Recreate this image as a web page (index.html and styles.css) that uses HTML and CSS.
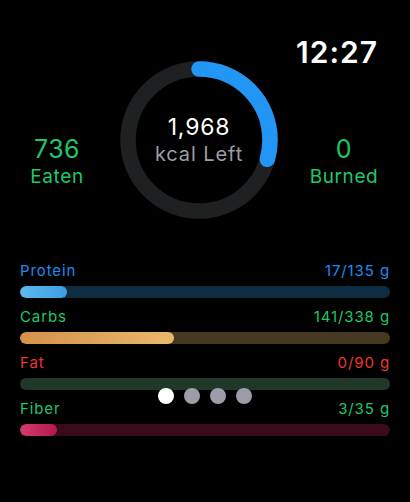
FILE: index.html
```html
<!DOCTYPE html>
<html>
<head>
<meta charset="utf-8">
<link rel="stylesheet" href="styles.css">
</head>
<body>
<div class="screen">
  <div class="time">12:27</div>
  <section class="summary">
    <div class="stat">
      <div class="stat-num">736</div>
      <div class="stat-label">Eaten</div>
    </div>
    <div class="ring">
      <svg class="ring-svg" width="158" height="158" viewBox="0 0 158 158">
        <circle cx="79" cy="79" r="71" fill="none" stroke="#1f2022" stroke-width="15.5"/>
        <circle cx="79" cy="79" r="71" fill="none" stroke="#2196f5" stroke-width="15.5" stroke-linecap="round"
          stroke-dasharray="131 1000" transform="rotate(-90 79 79)"/>
      </svg>
      <div class="ring-text">
        <div class="ring-num">1,968</div>
        <div class="ring-label">kcal Left</div>
      </div>
    </div>
    <div class="stat">
      <div class="stat-num">0</div>
      <div class="stat-label">Burned</div>
    </div>
  </section>
  <section class="macros">
    <div class="macro">
      <div class="macro-head protein-text"><span>Protein</span><span>17/135 g</span></div>
      <div class="track protein-track"><div class="fill protein-fill" style="width:12.7%"></div></div>
    </div>
    <div class="macro">
      <div class="macro-head green-text"><span>Carbs</span><span>141/338 g</span></div>
      <div class="track carbs-track"><div class="fill carbs-fill" style="width:41.7%"></div></div>
    </div>
    <div class="macro">
      <div class="macro-head red-text"><span>Fat</span><span>0/90 g</span></div>
      <div class="track fat-track"></div>
    </div>
    <div class="macro">
      <div class="macro-head green-text"><span>Fiber</span><span>3/35 g</span></div>
      <div class="track fiber-track"><div class="fill fiber-fill" style="width:9.9%"></div></div>
    </div>
  </section>
  <div class="dots">
    <span class="dot active"></span>
    <span class="dot"></span>
    <span class="dot"></span>
    <span class="dot"></span>
  </div>
</div>
</body>
</html>
```

FILE: styles.css
```css
html, body {
  margin: 0;
  padding: 0;
  background: #000;
}
body {
  font-family: Inter, "Noto Sans", sans-serif;
  color: #fff;
}
.screen {
  position: relative;
  width: 410px;
  height: 502px;
  overflow: hidden;
  background: #000;
}
.time {
  position: absolute;
  top: 35px;
  right: 32px;
  font-size: 30px;
  line-height: 35px;
  font-weight: 600;
  letter-spacing: 1px;
}
.summary {
  display: grid;
  grid-template-columns: 114px 158px 1fr;
  column-gap: 6px;
  padding: 61px 6px 0 0;
}
.stat {
  display: flex;
  flex-direction: column;
  align-items: center;
  padding-top: 73px;
  color: #1ec86a;
}
.stat-num {
  font-size: 25px;
  line-height: 30px;
  letter-spacing: 0.5px;
}
.stat-label {
  font-size: 19px;
  line-height: 24px;
  margin-top: 1px;
  letter-spacing: 0.6px;
}
.ring {
  display: grid;
  width: 158px;
  height: 158px;
}
.ring-svg,
.ring-text {
  grid-area: 1 / 1;
}
.ring-text {
  display: flex;
  flex-direction: column;
  align-items: center;
  padding-top: 52px;
}
.ring-num {
  font-size: 23px;
  line-height: 28px;
  letter-spacing: 0.8px;
}
.ring-label {
  font-size: 20px;
  line-height: 25px;
  color: #9c9da5;
  margin-top: 1px;
  letter-spacing: 0.9px;
}
.macros {
  display: flex;
  flex-direction: column;
  gap: 10px;
  padding: 0 20px;
  margin-top: 43px;
}
.macro {
  display: flex;
  flex-direction: column;
  gap: 6px;
}
.macro-head {
  display: flex;
  justify-content: space-between;
  font-size: 15px;
  line-height: 18px;
  letter-spacing: 0.9px;
}
.protein-text { color: #1c8cf0; }
.green-text { color: #1ec86a; }
.red-text { color: #f0362d; }
.track {
  height: 12px;
  border-radius: 6px;
  overflow: hidden;
  display: flex;
}
.fill {
  height: 100%;
  border-radius: 6px;
}
.protein-track { background: #0f2d40; }
.protein-fill { background: linear-gradient(90deg, #5cbaee, #3c9ee0); }
.carbs-track { background: #463922; }
.carbs-fill { background: linear-gradient(90deg, #d4914a, #e9b86b); }
.fat-track { background: #1f3827; }
.fiber-track { background: #3a0b1d; }
.fiber-fill { background: linear-gradient(90deg, #d83a6e, #b3194b); }
.dots {
  position: absolute;
  top: 388px;
  left: 0;
  right: 0;
  display: flex;
  justify-content: center;
  gap: 10px;
}
.dot {
  width: 16px;
  height: 16px;
  border-radius: 50%;
  background: #9b9da8;
}
.dot.active {
  background: #fff;
}
```
